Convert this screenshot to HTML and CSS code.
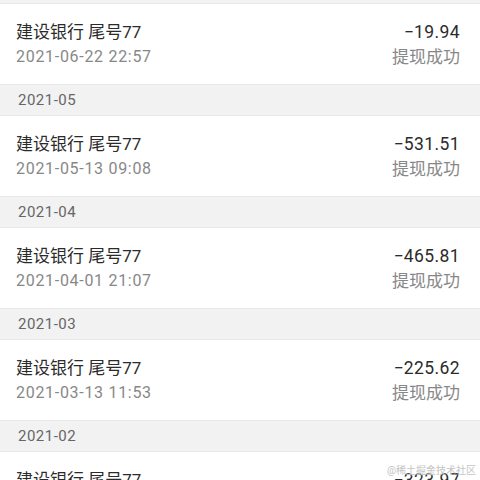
FILE: index.html
```html
<!DOCTYPE html>
<html lang="zh-CN">
<head>
    <meta charset="UTF-8">
    <meta name="viewport" content="width=device-width, initial-scale=1.0">
    <title>提现记录</title>
    <link rel="stylesheet" href="styles.css">
</head>
<body>
    <div class="list">
        <div class="top-gap"></div>
        <div class="row">
            <div class="left">
                <span class="title">建设银行 尾号77</span>
                <span class="time">2021-06-22 22:57</span>
            </div>
            <div class="right">
                <span class="amount">−19.94</span>
                <span class="status">提现成功</span>
            </div>
        </div>
        <div class="month">2021-05</div>
        <div class="row">
            <div class="left">
                <span class="title">建设银行 尾号77</span>
                <span class="time">2021-05-13 09:08</span>
            </div>
            <div class="right">
                <span class="amount">−531.51</span>
                <span class="status">提现成功</span>
            </div>
        </div>
        <div class="month">2021-04</div>
        <div class="row">
            <div class="left">
                <span class="title">建设银行 尾号77</span>
                <span class="time">2021-04-01 21:07</span>
            </div>
            <div class="right">
                <span class="amount">−465.81</span>
                <span class="status">提现成功</span>
            </div>
        </div>
        <div class="month">2021-03</div>
        <div class="row">
            <div class="left">
                <span class="title">建设银行 尾号77</span>
                <span class="time">2021-03-13 11:53</span>
            </div>
            <div class="right">
                <span class="amount">−225.62</span>
                <span class="status">提现成功</span>
            </div>
        </div>
        <div class="month">2021-02</div>
        <div class="row">
            <div class="left">
                <span class="title">建设银行 尾号77</span>
                <span class="time">2021-02-08 10:21</span>
            </div>
            <div class="right">
                <span class="amount">−323.97</span>
                <span class="status">提现成功</span>
            </div>
        </div>
    </div>
    <div class="watermark">@稀土掘金技术社区</div>
</body>
</html>
```

FILE: styles.css
```css
body{
 margin: 0;
 font-family: Roboto, "Noto Sans CJK SC", sans-serif;
 background-color: #fff;
 height: 480px;
 overflow: hidden;
 position: relative;
}
.list{
 display: flex;
 flex-direction: column;
}
.top-gap{
 height: 3px;
 background-color: #f2f2f2;
 border-bottom: 1px solid #e8e8e8;
}
.row{
 height: 80px;
 box-sizing: border-box;
 display: flex;
 justify-content: space-between;
 align-items: center;
 padding: 0 20px 0 16px;
 background-color: #fff;
}
.left, .right{
 display: flex;
 flex-direction: column;
 gap: 3px;
}
.right{
 align-items: flex-end;
}
.title{
 font-size: 17px;
 line-height: 22px;
 color: #2b2b2b;
}
.time{
 font-size: 16px;
 line-height: 22px;
 letter-spacing: 0.7px;
 color: #888;
}
.amount{
 font-size: 17.5px;
 line-height: 22px;
 letter-spacing: 0.4px;
 color: #2b2b2b;
}
.status{
 font-size: 17px;
 line-height: 22px;
 color: #888;
}
.month{
 height: 32px;
 box-sizing: border-box;
 display: flex;
 align-items: center;
 padding-left: 18px;
 font-size: 15px;
 letter-spacing: 0.5px;
 color: #666;
 background-color: #f2f2f2;
 border-top: 1px solid #e8e8e8;
 border-bottom: 1px solid #e8e8e8;
}
.watermark{
 position: absolute;
 right: 4px;
 bottom: 3px;
 font-size: 10px;
 line-height: 12px;
 color: #c4c4c4;
 text-shadow: 0 0 2px #fff;
}
```
